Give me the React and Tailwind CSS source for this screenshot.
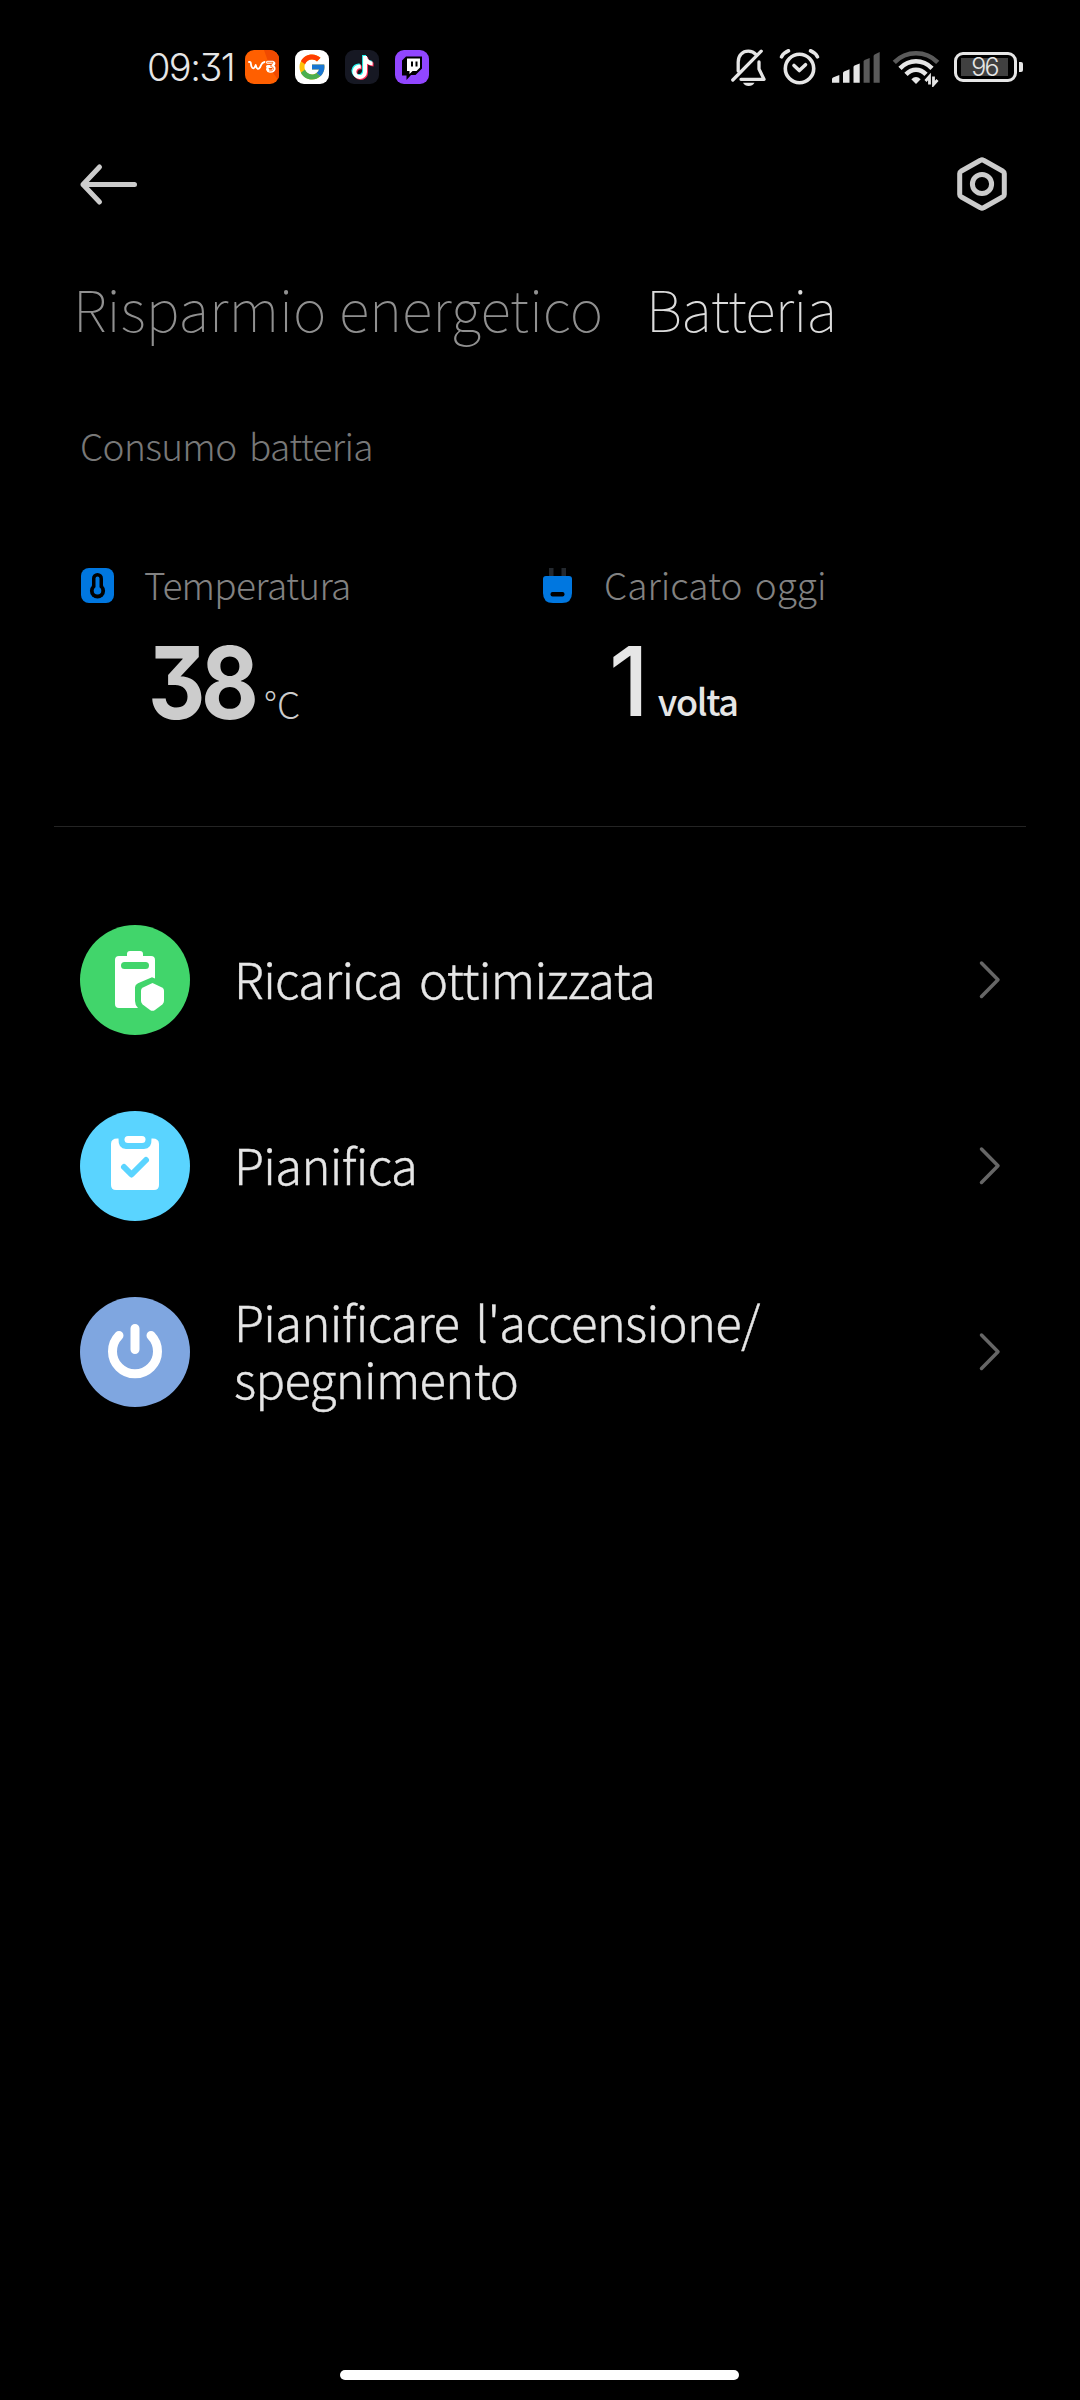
import { FaTiktok } from 'react-icons/fa6';
import { FcGoogle } from 'react-icons/fc';

function W3Icon() {
  return (
    <div className="h-[34px] w-[34px] overflow-hidden rounded-[9px] bg-[#ff5f00]">
      <svg viewBox="0 0 34 34" className="h-full w-full" fill="none" strokeLinecap="round" strokeLinejoin="round">
        <path d="M19 0H34V31L26 20Z" fill="#f04a00" />
        <path d="M4 12c2.500-.5 1.500 2 2.500 4.500s2.500 3 4.200-1.500c.8 4.500 3 5 4.500 2s1.200-4.500 4.300-5" stroke="#fff" strokeWidth="1.800" />
        <path d="M22.500 12.300h5.500q1.500.5.500 2l-1.500 2q2.500.8 2 3-.8 2.300-4 2-2-.2-2.500-2M22.500 16.500h3" stroke="#fff" strokeWidth="3" />
        <path d="M22.500 12.300h5.500l-2.500 4q3.500.7 3 3-.8 2-4 1.700" stroke="#ff5f00" strokeWidth=".8" />
      </svg>
    </div>
  );
}

function GoogleIcon() {
  return (
    <div className="flex h-[34px] w-[34px] items-center justify-center rounded-[9px] bg-white">
      <FcGoogle size={30} />
    </div>
  );
}

function TiktokIcon() {
  return (
    <div className="relative h-[34px] w-[34px] rounded-[9px] bg-[#161823]">
      <FaTiktok size={23} className="absolute top-[5px] left-[5px] text-[#25f4ee]" />
      <FaTiktok size={23} className="absolute top-[7px] left-[7px] text-[#fe2c55]" />
      <FaTiktok size={23} className="absolute top-[6px] left-[6px] text-white" />
    </div>
  );
}

function TwitchIcon() {
  return (
    <div className="h-[34px] w-[34px] rounded-[9px] bg-[#9146ff]">
      <svg viewBox="0 0 34 34" className="h-full w-full">
        <path d="M11 6.500H27V18.500L20.500 25H16L11.500 30V25.500H7V10.500Z" fill="#000" />
        <path d="M12 8.500H25V17.500L21.500 21H17.500L14.500 24V21H12Z" fill="#fff" />
        <path d="M16 11.500h2v5h-2zM20.500 11.500h2v5h-2z" fill="#000" />
      </svg>
    </div>
  );
}

function BellOff() {
  return (
    <svg width="36" height="40" viewBox="0 0 36 40" fill="none" stroke="#e6e6e6" strokeWidth="3.300" strokeLinecap="round" strokeLinejoin="round">
      <path d="M7.200 24V15C7.200 8.500 11.500 4.200 17.300 4.200c3.200 0 5.800 1.100 7.500 3.200" />
      <path d="M28 15v7l5 10.300H10" />
      <path d="M1.800 33L30.200 4.200" />
      <path d="M12 35.800H23.500Q21.500 39 17.700 39T12 35.800Z" fill="#e6e6e6" stroke="none" />
    </svg>
  );
}

function AlarmIcon() {
  return (
    <svg width="42" height="40" viewBox="0 0 42 40" fill="none" stroke="#e6e6e6" strokeWidth="3.600" strokeLinecap="round" strokeLinejoin="round">
      <circle cx="20.500" cy="21.500" r="14.200" />
      <path d="M15 18.500l5.300 5 6.200-5.800M2.500 9.800Q5 5.500 9.500 3.800M31.500 3.800Q36 5.500 38.500 9.800" />
    </svg>
  );
}

function SignalIcon() {
  return (
    <svg width="48" height="40" viewBox="0 0 48 40">
      <g fill="#e6e6e6">
        <path d="M0 35.700V32q0-1 1-1.500L7.300 28v7.700Z" />
        <path d="M11 35.700V26q0-1 1-1.500L17.500 22.300v13.400Z" />
        <path d="M21.500 35.700V20q0-1 1-1.500L27.700 16.500v19.200Z" />
      </g>
      <g fill="#5a5a5a">
        <path d="M31.600 35.700V14.500q0-1 1-1.500L37.700 11v24.700Z" />
        <path d="M41.600 35.700V9q0-1 1-1.500L47.700 5v30.700Z" />
      </g>
    </svg>
  );
}

function WifiIcon() {
  return (
    <svg width="48" height="40" viewBox="0 0 48 40" fill="none" strokeWidth="4.600">
      <path d="M2.300 15.300Q11.500 6.300 24 6.300T45.700 15.300" stroke="#5a5a5a" />
      <path d="M8 21.300Q15 14.300 24 14.300T40 21.300" stroke="#e6e6e6" />
      <path d="M14 27.300Q18.500 22.800 24 22.800T34 27.300" stroke="#e6e6e6" />
      <path d="M19.300 32.200Q24 27.700 28.700 32.200L24 37Z" fill="#e6e6e6" />
      <path d="M37.500 37.500V29.500l-4 4.500M41.500 29.500V37.500l4-4.500" stroke="#e6e6e6" strokeWidth="2.800" />
    </svg>
  );
}

function StatusBar() {
  return (
    <div className="flex h-[134px] items-center pl-[147px] font-['Inter',sans-serif]">
      <span className="w-[98px] text-[38px] leading-[40px] font-light tracking-[-1.6px] text-[#e6e6e6] [font-feature-settings:'cv09']">09:31</span>
      <div className="flex gap-4">
        <W3Icon />
        <GoogleIcon />
        <TiktokIcon />
        <TwitchIcon />
      </div>
      <div className="ml-[302px] flex items-center">
        <BellOff />
        <div className="ml-[12px]"><AlarmIcon /></div>
        <div className="ml-[11px]"><SignalIcon /></div>
        <div className="ml-[12px]"><WifiIcon /></div>
        <div className="ml-[14px] flex h-[30px] w-[63px] items-center rounded-[9px] border-[3px] border-[#e6e6e6] pl-1">
          <div className="flex h-[18px] w-[47px] items-center justify-center bg-[#404040] text-[25px] leading-[18px] font-light tracking-[-1.8px] text-[#e6e6e6]">96</div>
        </div>
        <div className="ml-[2px] h-[10px] w-1 rounded-r-[2px] bg-[#e6e6e6]" />
      </div>
    </div>
  );
}

function Header() {
  return (
    <div className="flex h-[100px] items-center justify-between pr-[72px] pl-[79px]">
      <svg width="60" height="44" viewBox="0 0 60 44" fill="none" stroke="#ccc" strokeWidth="5" strokeLinecap="round" strokeLinejoin="round">
        <path d="M20.500 5L4 22.500L20.500 40M4 22.500H55.500" />
      </svg>
      <svg width="52" height="56" viewBox="0 0 52 56" fill="none" stroke="#ccc" strokeWidth="5" strokeLinejoin="round">
        <path d="M24.500 4.300q1.500-.9 3 0L47 15.300q1.300.8 1.300 2.300V38.400q0 1.500-1.300 2.300L27.500 51.700q-1.500.9-3 0L5 40.700q-1.300-.8-1.300-2.300V17.600q0-1.500 1.300-2.300Z" />
        <circle cx="26" cy="28" r="9.600" />
      </svg>
    </div>
  );
}

function ThermoIcon() {
  return (
    <svg width="33" height="35" viewBox="0 0 33 35">
      <rect width="33" height="35" rx="8" fill="#0077e0" />
      <path d="M16.500 10.500V23" stroke="#000" strokeWidth="11" strokeLinecap="round" />
      <circle cx="16.500" cy="22.800" r="7.600" fill="#000" />
      <path d="M16.500 10.500V23" stroke="#0077e0" strokeWidth="4" strokeLinecap="round" />
      <circle cx="16.500" cy="22.800" r="3.800" fill="#0077e0" />
    </svg>
  );
}

function PlugIcon() {
  return (
    <svg width="29" height="35" viewBox="0 0 29 35">
      <path d="M6 0h4.500v9H6zM18.500 0H23v9h-4.500z" fill="#23282e" />
      <path d="M3 8H26q3 0 3 3V25q0 10-10 10H10Q0 35 0 25V11Q0 8 3 8Z" fill="#0077e0" />
      <rect x="7.500" y="24" width="14" height="4.500" rx="2" fill="#000" />
    </svg>
  );
}

function OptimizedIcon() {
  return (
    <svg width="110" height="110" viewBox="0 0 110 110">
      <circle cx="55" cy="55" r="55" fill="#41d56b" />
      <path d="M39 31H47V29q0-3 3-3H60q3 0 3 3V31H71q4 0 4 4V53.500L72 52.300 58 58.300q-3 1.300-3 4V76q0 4 3 7H39q-4 0-4-4V35q0-4 4-4Z" fill="#fff" />
      <rect x="41" y="37" width="28" height="7" rx="3.500" fill="#41d56b" />
      <path d="M72.500 58L82 62.500q2 1 2 3V76q0 2-1.700 3.400L75 85q-2.500 1.700-5 0L62.700 79.400Q61 78 61 76V65.500q0-2 2-3Z" fill="#fff" />
    </svg>
  );
}

function ScheduleIcon() {
  return (
    <svg width="110" height="110" viewBox="0 0 110 110" fill="none" strokeLinecap="round" strokeLinejoin="round">
      <circle cx="55" cy="55" r="55" fill="#5ad4ff" />
      <path d="M38.500 27.500Q38 38 46 38H64Q72 38 71.500 27.500Q79 27 79 33V74q0 5-5 5H36q-5 0-5-5V33Q31 27 38.500 27.500Z" fill="#fff" />
      <rect x="44.500" y="25" width="21" height="7" rx="3.500" fill="#fff" />
      <path d="M44 56l7.500 7.500L66 49" stroke="#5ad4ff" strokeWidth="6" />
    </svg>
  );
}

function PowerIcon() {
  return (
    <svg width="110" height="110" viewBox="0 0 110 110" fill="none" stroke="#fff" strokeWidth="9" strokeLinecap="round">
      <circle cx="55" cy="55" r="55" fill="#7fa6e0" stroke="none" />
      <path d="M55 31.500V52.500M39 38.500A22.500 22.500 0 1 0 71 38.500" />
    </svg>
  );
}

const rows = [
  { icon: <OptimizedIcon />, label: 'Ricarica ottimizzata' },
  { icon: <ScheduleIcon />, label: 'Pianifica' },
  { icon: <PowerIcon />, label: "Pianificare l'accensione/ spegnimento" },
];

export default function App() {
  return (
    <div className="flex h-[2400px] w-[1080px] flex-col overflow-hidden bg-black font-['Noto_Sans_CJK_SC','Noto_Sans',sans-serif] text-[#e6e6e6]">
      <StatusBar />
      <Header />

      <div className="mt-[33px] flex pl-[73px] text-[57px] leading-[80px] font-thin whitespace-nowrap">
        <span className="w-[573px] text-[#909090]">Risparmio energetico</span>
        <span className="tracking-[-0.7px] text-[#dcdcdc]">Batteria</span>
      </div>

      <div className="mt-[73px] pl-[80px] text-[37px] leading-[50px] font-light tracking-[-0.65px] text-[#787878] [word-spacing:5px]">Consumo batteria</div>

      <div className="mt-[89px] flex pl-[81px]">
        <div className="w-[462px]">
          <div className="flex h-[50px] items-center text-[37px] leading-[50px] font-light text-[#828282]">
            <div className="w-[63px] pt-[2px]"><ThermoIcon /></div>
            <span className="tracking-[-0.7px]">Temperatura</span>
          </div>
          <div className="flex h-[130px] items-baseline pl-[67px] text-[#ccc]">
            <span className="inline-block w-[112px] origin-left scale-x-[0.88] font-['Inter',sans-serif] text-[101px] leading-[146px] font-bold tracking-[-5px] [font-feature-settings:'cv09']">38</span>
            <span className="ml-[4px] text-[37px] leading-[50px] font-light">°C</span>
          </div>
        </div>
        <div>
          <div className="flex h-[50px] items-center text-[37px] leading-[50px] font-light text-[#828282]">
            <div className="w-[61px] pt-[2px]"><PlugIcon /></div>
            <span className="[word-spacing:4px]">Caricato oggi</span>
          </div>
          <div className="flex h-[130px] items-baseline pl-[66px]">
            <span className="font-['Inter',sans-serif] text-[96px] leading-[144px] font-medium">1</span>
            <span className="ml-[9px] text-[36px] leading-[50px] font-medium tracking-[-1.3px]">volta</span>
          </div>
        </div>
      </div>

      <div className="mt-[87px] mr-[54px] ml-[54px] h-px bg-[#242424]" />

      <div className="mt-[60px] flex flex-col">
        {rows.map(r => (
          <div key={r.label} className="flex h-[186px] items-center pr-[78px] pl-[80px]">
            {r.icon}
            <div className="ml-[44px] w-[560px] pb-[6px] text-[49px] leading-[57px] font-light tracking-[-0.65px] [-webkit-text-stroke:0.4px] [word-spacing:6px]">{r.label}</div>
            <svg className="ml-auto" width="24" height="40" viewBox="0 0 24 40" fill="none" stroke="#666" strokeWidth="3.500" strokeLinecap="round" strokeLinejoin="round">
              <path d="M3.500 3L20 19.700L3.500 36.500" />
            </svg>
          </div>
        ))}
      </div>

      <div className="mt-auto mb-[20px] ml-[340px] h-[10px] w-[399px] rounded-full bg-white" />
    </div>
  );
}
